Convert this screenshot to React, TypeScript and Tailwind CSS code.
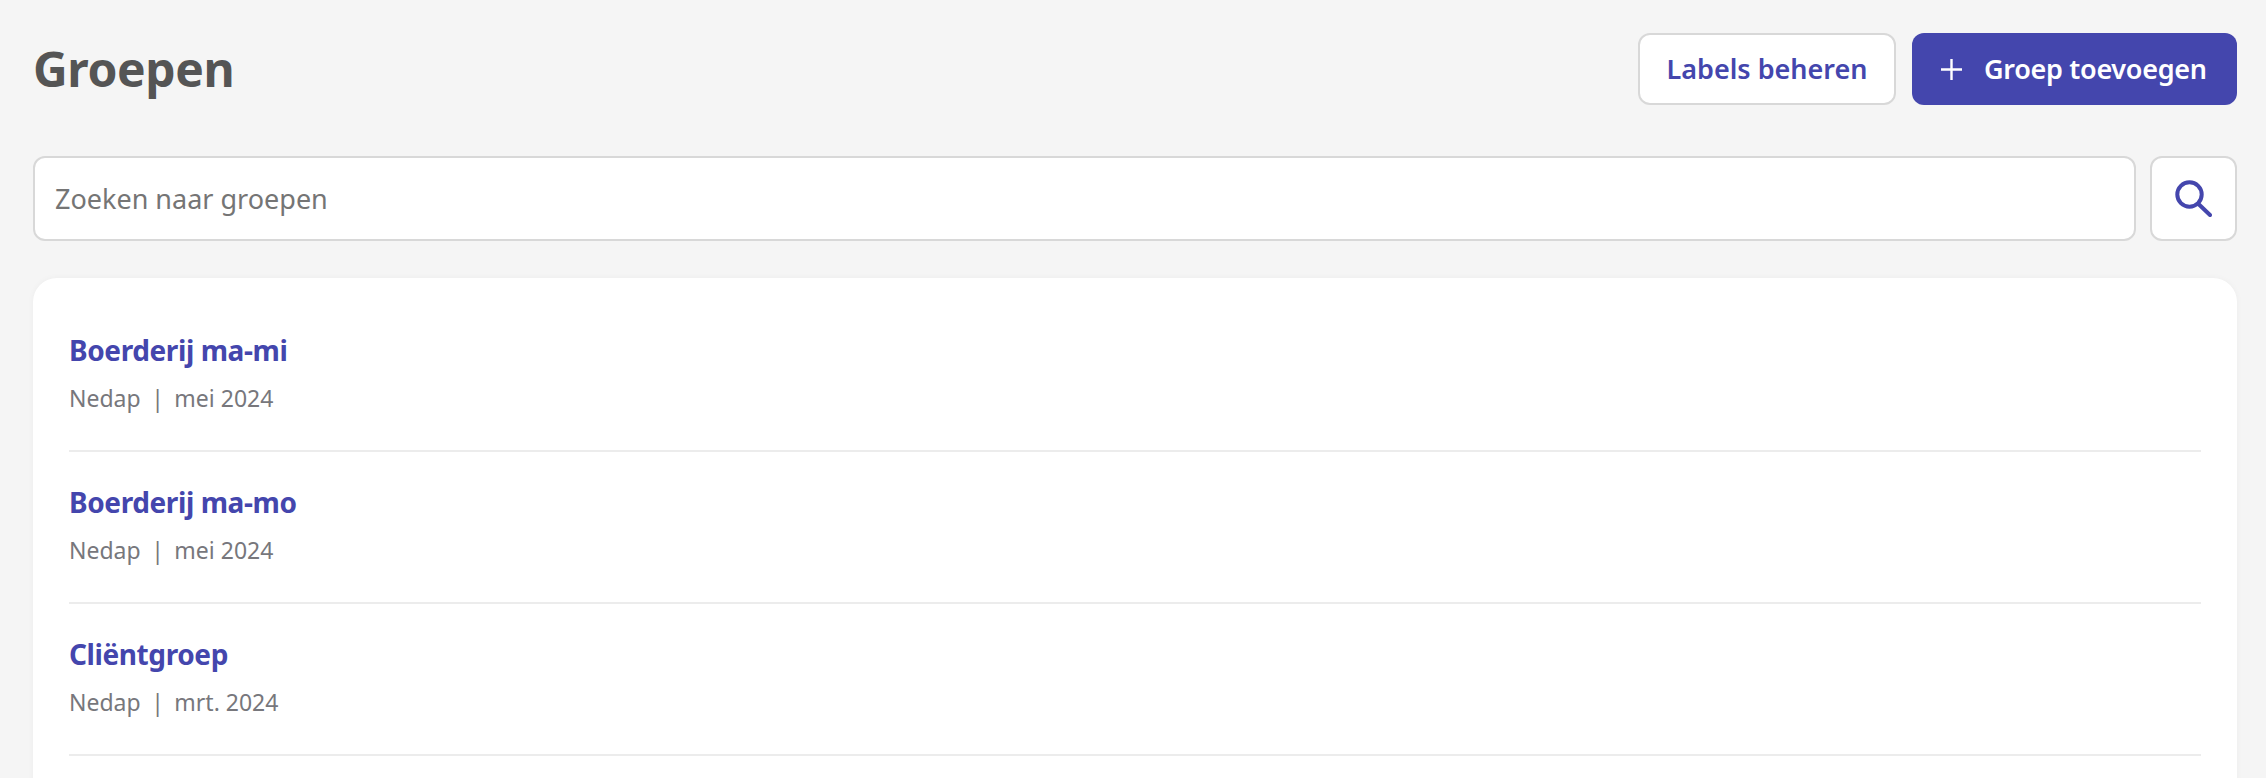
const groups = [
  { name: "Boerderij ma-mi", date: "mei 2024" },
  { name: "Boerderij ma-mo", date: "mei 2024" },
  { name: "Cliëntgroep", date: "mrt. 2024" }
];

export default function App() {
  return (
    <div className="h-[778px] overflow-hidden bg-[#f5f5f5] pt-[33px] pr-[29px] pl-[33px] font-['Noto_Sans',sans-serif]">
      <div className="flex h-[72px] items-center justify-between">
        <h1 className="text-[48px] font-bold tracking-[-0.4px] text-[#555555]">Groepen</h1>
        <div className="flex gap-[16px]">
          <button type="button" className="h-[72px] w-[258px] rounded-[12px] border-2 border-[#d8d8d8] bg-white text-[27px] font-semibold text-[#4446ad]">
            Labels beheren
          </button>
          <button type="button" className="flex h-[72px] w-[325px] items-center rounded-[12px] bg-[#4446ad] pl-[29px] text-[27px] font-semibold tracking-[-0.3px] text-white">
            <svg width="21" height="21" viewBox="0 0 21 21" fill="none" stroke="currentColor" strokeWidth="2.4" className="mr-[22px]">
              <path d="M10.5 0v21M0 10.5h21" />
            </svg>
            Groep toevoegen
          </button>
        </div>
      </div>

      <div className="mt-[51px] flex gap-[14px]">
        <div className="flex h-[85px] flex-1 items-center rounded-[12px] border-2 border-[#d8d8d8] bg-white pt-[2px] pl-[20px] text-[27px] text-[#757575]">
          Zoeken naar groepen
        </div>
        <button type="button" className="flex h-[85px] w-[87px] items-center justify-center rounded-[12px] border-2 border-[#d8d8d8] bg-white text-[#4446ad]">
          <svg width="37" height="37" viewBox="0 0 37 37" fill="none" stroke="currentColor" strokeWidth="4" strokeLinecap="round">
            <circle cx="14.5" cy="14.5" r="12.2" />
            <path d="M23.5 24L35 35" />
          </svg>
        </button>
      </div>

      <div className="mt-[37px] h-[600px] rounded-t-[24px] bg-white px-[36px] pt-[22px] shadow-[0_0_6px_rgba(0,0,0,0.04)]">
        {groups.map((group) => (
          <div key={group.name} className="h-[152px] border-b-2 border-[#ececec] pt-[28px]">
            <div className="text-[28px] leading-[44px] font-bold tracking-[-0.4px] text-[#4446ad]">{group.name}</div>
            <div className="mt-[6px] flex text-[23px] leading-[40px] text-[#77777c]">
              <span>Nedap</span>
              <span className="mx-[10.5px]">|</span>
              <span>{group.date}</span>
            </div>
          </div>
        ))}
      </div>
    </div>
  );
}
